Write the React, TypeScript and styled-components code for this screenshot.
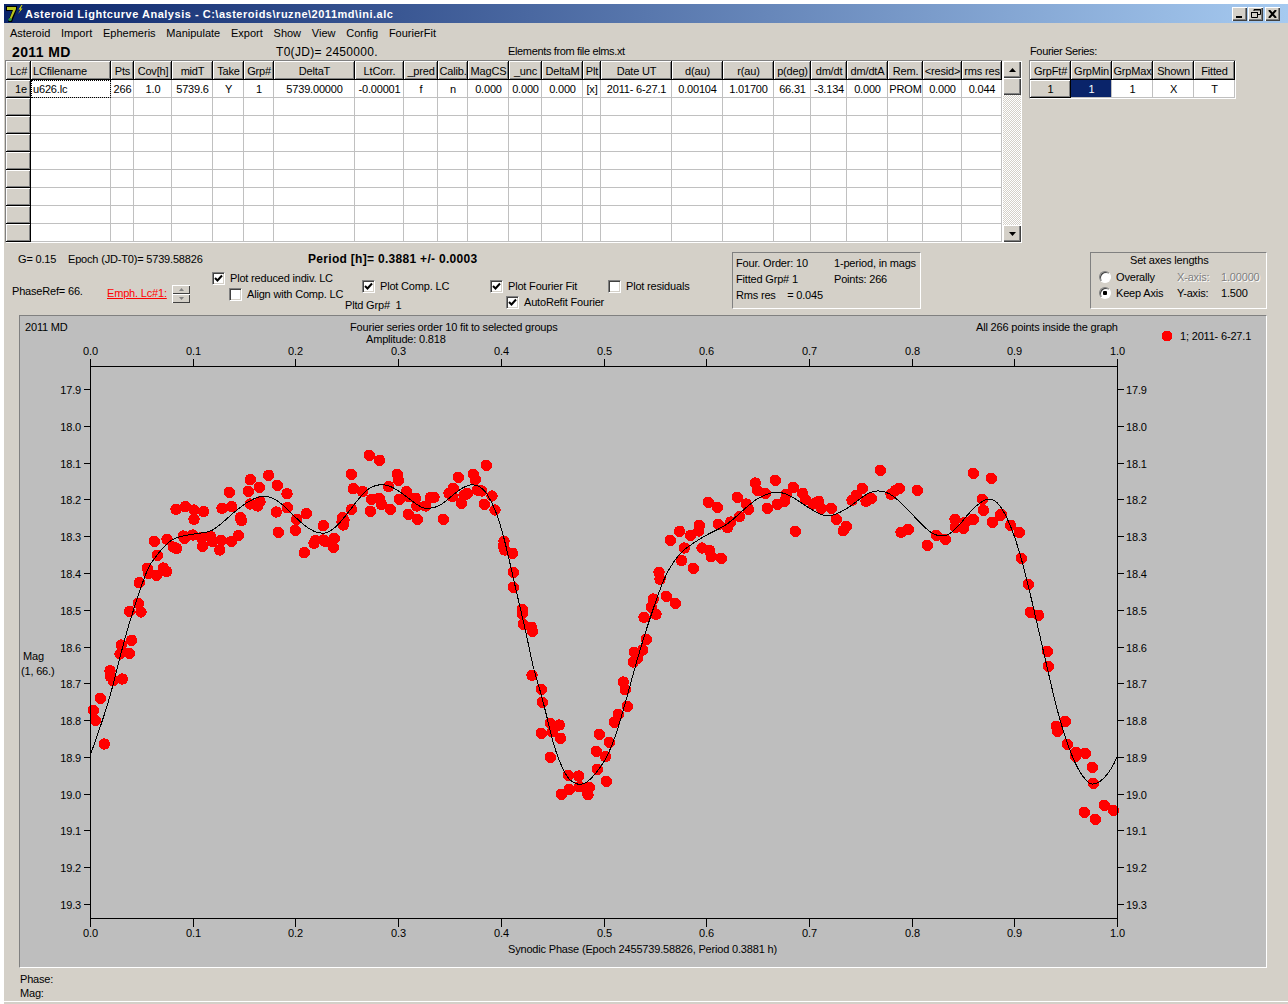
import React from "react";
import styled, { createGlobalStyle } from "styled-components";

const FACE = "#d4d0c8";
const UI_FONT = `"Liberation Sans", Arial, sans-serif`;

const GlobalStyle = createGlobalStyle`
  html, body {
    margin: 0;
    background: #fff;
  }
  body {
    padding: 4px 0 0 4px;
    overflow: hidden;
    font: 11px/14px ${UI_FONT};
    letter-spacing: -0.18px;
    color: #000;
  }
`;

/* ---------- lightcurve data, traced off the plot in page pixels ---------- */

type Trace = { x: number; y: number; dots: number[][] };

const TRACES: Trace[] = [
  {
    x: 60, y: 430,
    dots: [
      [100,841],[106,871],[121,805],[133,942],[150,722],[152,740],[160,752],[187,747],[180,672],[184,645],
      [208,670],[215,631],[209,544],[235,520],[243,546],[238,458],[262,415],[265,430],[289,436],[310,414],
      [320,425],[292,376],[283,334],[321,328],[340,351],[350,356],[348,238],[376,230],[402,240],[402,268],
      [431,245],[370,318],[374,325],[398,315],[425,323],[428,349],[452,320],[458,335],[484,331],[479,360],
      [515,334],[535,317],[486,235],[515,230],[541,263],[545,272],[508,187],[565,184],[571,149],[598,172],
      [626,136],[652,166],[681,191],[571,222],[593,228],[600,215],[649,246],[655,307],[682,233],[710,268],
      [739,251],[706,301],[790,287],[733,368],[762,340],[766,332],[790,330],[797,335],[823,325],[820,352],
      [848,263],[850,285],[846,275],[875,238],[874,133],[880,176],[852,270],
    ],
  },
  {
    x: 360, y: 430,
    dots: [
      [28,76],[59,91],[8,185],[35,208],[58,205],[65,224],[31,244],[91,238],[86,170],[112,133],
      [116,151],[118,208],[139,185],[145,199],[167,205],[170,228],[145,253],[172,268],[197,228],[212,202],
      [222,202],[250,268],[295,142],[267,190],[280,175],[278,200],[304,220],[312,196],[322,190],[340,133],
      [346,149],[379,106],[352,180],[365,183],[396,198],[373,223],[405,240],[432,334],[430,348],[434,360],
      [458,370],[460,427],[460,472],[487,538],[487,551],[490,583],[515,592],[518,604],[516,736],[544,778],
      [547,817],[571,880],[598,885],[577,905],[544,910],[602,925],[571,982],[625,1036],[656,1038],[604,1093],
      [628,1078],[658,1070],[688,1072],[684,1094],[682,1082],[712,1018],[739,1054],[709,964],[737,980],[718,913],
      [748,937],[763,877],[775,853],[802,829],[790,756],[796,779],[820,696],[832,686],[823,667],[848,660],
      [859,628],[852,562],[888,553],[874,532],[880,507],[897,427],[900,448],
    ],
  },
  {
    x: 660, y: 430,
    dots: [
      [46,520],[19,499],[65,392],[100,415],[73,354],[31,331],[59,304],[92,316],[116,303],[118,286],
      [126,354],[149,362],[154,380],[184,385],[145,217],[172,232],[175,283],[203,293],[212,276],[239,260],
      [232,202],[259,222],[266,238],[286,159],[292,181],[316,190],[346,151],[322,235],[352,223],[374,214],
      [379,193],[400,172],[406,304],[428,190],[436,208],[460,222],[476,214],[484,235],[514,235],[529,268],
      [559,289],[550,302],[576,211],[589,196],[607,175],[618,214],[634,205],[661,121],[693,193],[706,182],
      [718,175],[772,181],[723,307],[745,298],[829,316],[802,346],[856,328],[885,268],[886,292],
    ],
  },
  {
    x: 900, y: 460,
    dots: [
      [190,205],[196,187],[220,178],[220,40],[274,55],[247,118],[250,151],[277,187],[301,166],[304,163],
      [332,196],[358,217],[364,295],[385,373],[391,457],[416,466],[442,574],[445,619],[469,799],[472,814],
      [496,784],[502,853],[529,877],[526,889],[556,880],[577,922],[580,970],[613,1036],[553,1057],[586,1078],
      [640,1051],
    ],
  },
];

const DOTS = TRACES.flatMap((t) => t.dots.map(([zx, zy]) => [t.x + zx / 3, t.y + zy / 3]));

const FIT = [
  [90.7,754],[100,728],[110,697],[120,657],[128,627],[138,596],[148,567],[157,555],[167,543],[177,537],
  [193,534],[210,532],[220,525],[233,513],[247,502],[260,496],[268,496],[280,502],[293,515],[307,528],
  [320,534],[330,532],[340,523],[350,510],[360,497],[370,487],[382,484],[393,487],[407,497],[420,507],
  [428,509],[440,506],[453,495],[463,487],[473,484],[483,488],[492,502],[500,523],[507,550],[513,577],
  [520,607],[527,637],[533,667],[540,690],[547,717],[553,743],[560,763],[567,777],[573,783],[582,785],
  [590,780],[600,768],[608,755],[617,732],[627,697],[637,660],[647,627],[660,589],[668,570],[680,553],
  [693,543],[710,533],[727,525],[740,513],[757,498],[775,491],[790,495],[807,507],[823,516],[833,516],
  [850,507],[867,493],[880,490],[893,495],[910,512],[927,530],[937,536],[947,536],[958,527],[973,508],
  [987,498],[997,501],[1007,517],[1017,543],[1027,580],[1037,623],[1047,667],[1057,710],[1067,743],[1077,768],
  [1087,782],[1093,785],[1103,780],[1112,768],[1117,757],
];

function smoothPath(pts: number[][]) {
  let d = `M${pts[0][0]} ${pts[0][1]}`;
  for (let i = 1; i < pts.length - 1; i++) {
    const mx = (pts[i][0] + pts[i + 1][0]) / 2;
    const my = (pts[i][1] + pts[i + 1][1]) / 2;
    d += ` Q${pts[i][0]} ${pts[i][1]} ${mx} ${my}`;
  }
  const last = pts[pts.length - 1];
  return `${d} L${last[0]} ${last[1]}`;
}

/* ---------- axis geometry ---------- */

const X0 = 90.5;
const X1 = 1117.5;
const Y_TOP = 366.5;
const Y_BOTTOM = 918.5;
const X_TICKS = Array.from({ length: 11 }, (_, i) => i / 10);
const MAG_TICKS = Array.from({ length: 15 }, (_, i) => 17.9 + i / 10);
const magY = (m: number) => Math.floor(389.5 + (m - 17.9) * 367.9) + 0.5;
const phaseX = (p: number) => Math.floor(X0 + p * (X1 - X0)) + 0.5;

/* ---------- sheet definitions ---------- */

const LC_COLUMNS = [
  { title: "Lc#", width: 25, value: "1e" },
  { title: "LCfilename", width: 80, value: "u626.lc" },
  { title: "Pts", width: 23, value: "266" },
  { title: "Cov[h]", width: 38, value: "1.0" },
  { title: "midT", width: 41, value: "5739.6" },
  { title: "Take", width: 31, value: "Y" },
  { title: "Grp#", width: 30, value: "1" },
  { title: "DeltaT", width: 81, value: "5739.00000" },
  { title: "LtCorr.", width: 49, value: "-0.00001" },
  { title: "_pred", width: 34, value: "f" },
  { title: "Calib.", width: 30, value: "n" },
  { title: "MagCS", width: 41, value: "0.000" },
  { title: "_unc", width: 33, value: "0.000" },
  { title: "DeltaM", width: 41, value: "0.000" },
  { title: "Plt", width: 18, value: "[x]" },
  { title: "Date UT", width: 71, value: "2011- 6-27.1" },
  { title: "d(au)", width: 51, value: "0.00104" },
  { title: "r(au)", width: 51, value: "1.01700" },
  { title: "p(deg)", width: 37, value: "66.31" },
  { title: "dm/dt", width: 36, value: "-3.134" },
  { title: "dm/dtA", width: 41, value: "0.000" },
  { title: "Rem.", width: 35, value: "PROM" },
  { title: "<resid>", width: 39, value: "0.000" },
  { title: "rms res", width: 40, value: "0.044" },
];

const FOURIER_COLUMNS = ["GrpFt#", "GrpMin", "GrpMax", "Shown", "Fitted"];
const FOURIER_ROW = ["1", "1", "1", "X", "T"];
const MENU = ["Asteroid", "Import", "Ephemeris", "Manipulate", "Export", "Show", "View", "Config", "FourierFit"];

/* ---------- window chrome ---------- */

const Window = styled.div`
  width: 1284px;
  height: 1000px;
  background: ${FACE};
  overflow: hidden;
`;

const TitleBar = styled.div`
  height: 19px;
  display: flex;
  align-items: center;
  padding: 0 8px 0 2px;
  background: linear-gradient(90deg, #0a246a, #a6caf0);
`;

const TitleText = styled.span`
  flex: 1;
  margin-left: 2px;
  color: #fff;
  font-weight: bold;
  font-size: 11px;
  letter-spacing: 0.52px;
  white-space: nowrap;
`;

const CaptionButton = styled.button<{ $gap?: number }>`
  width: 15px;
  height: 14px;
  margin-left: ${(p) => p.$gap ?? 0}px;
  padding: 0;
  border: 0;
  background: ${FACE};
  box-shadow: inset 1px 1px 0 #fff, inset -1px -1px 0 #404040, inset -2px -2px 0 #808080;
  display: flex;
  align-items: center;
  justify-content: center;
`;

const MenuBar = styled.div`
  height: 20px;
  display: flex;
  align-items: center;
  padding-left: 0.5px;
`;

const MenuItem = styled.span`
  padding: 0 5.4px;
  letter-spacing: 0;
  white-space: nowrap;
`;

/* ---------- top row: sheets ---------- */

const TopArea = styled.div`
  display: flex;
  height: 200px;
`;

const LcArea = styled.div`
  width: 1025px;
  padding-left: 1px;
  box-sizing: content-box;
`;

const InfoLine = styled.div`
  height: 17px;
  display: flex;
  align-items: center;
`;

const Caption = styled.span<{ $width?: number; $indent?: number }>`
  display: inline-block;
  width: ${(p) => (p.$width ? `${p.$width}px` : "auto")};
  margin-left: ${(p) => p.$indent ?? 0}px;
  white-space: pre;
`;

const SmallCaption = styled(Caption)`
  letter-spacing: -0.35px;
  margin-top: -2px;
`;

const AsteroidName = styled(Caption)`
  font-weight: bold;
  font-size: 14px;
  letter-spacing: 0.4px;
`;

const LargeCaption = styled(Caption)`
  font-size: 12px;
  letter-spacing: 0.3px;
`;

const PeriodCaption = styled(LargeCaption)`
  font-weight: bold;
`;

const SheetRow = styled.div`
  display: flex;
`;

const Sheet = styled.div<{ $columns: string }>`
  display: grid;
  grid-template-columns: ${(p) => p.$columns};
  grid-auto-rows: 18px;
  grid-template-rows: 19px;
  align-self: flex-start;
  background: #fff;
  border: 1px solid;
  border-color: #808080 #fff #fff #808080;
`;

const Cell = styled.div<{ $align?: string; $focus?: boolean; $selected?: boolean }>`
  box-sizing: border-box;
  display: flex;
  align-items: center;
  justify-content: ${(p) => p.$align ?? "center"};
  padding: 0 1px 0 2px;
  overflow: hidden;
  white-space: pre;
  border-right: 1px solid #c0c0c0;
  border-bottom: 1px solid #c0c0c0;
  background: ${(p) => (p.$selected ? "#0a246a" : "#fff")};
  color: ${(p) => (p.$selected ? "#fff" : "#000")};
  ${(p) => (p.$focus ? "outline: 1px dotted #000; outline-offset: -1px;" : "")}
`;

const FixedCell = styled(Cell)`
  background: ${FACE};
  color: #000;
  border-right: 1px solid #000;
  border-bottom: 1px solid #000;
  box-shadow: inset 1px 1px 0 #fff, inset -1px -1px 0 #808080;
  padding-right: ${(p) => (p.$align === "flex-end" ? "3px" : "1px")};
`;

const HeaderCell = styled(FixedCell)`
  padding-top: 2px;
`;

const ScrollBar = styled.div`
  width: 18px;
  height: 181px;
  margin-top: 1px;
  display: flex;
  flex-direction: column;
  border-right: 1px solid #fff;
  border-bottom: 1px solid #fff;
  background: repeating-conic-gradient(${FACE} 0 25%, #fff 0 50%) 0 0 / 2px 2px;
`;

const ScrollButton = styled.div`
  height: 17px;
  flex: none;
  background: ${FACE};
  box-shadow: inset 1px 1px 0 #fff, inset -1px -1px 0 #404040, inset -2px -2px 0 #808080;
  display: flex;
  align-items: center;
  justify-content: center;
`;

const ScrollTrack = styled.div`
  flex: 1;
`;

const FourierArea = styled.div`
  margin-left: -1px;
`;

/* ---------- middle strip: form controls ---------- */

const ControlStrip = styled.div`
  display: flex;
  height: 72px;
`;

const ControlsLeft = styled.div`
  width: 728px;
  display: flex;
  flex-direction: column;
`;

const SummaryRow = styled.div`
  height: 14px;
  margin-top: 9px;
  display: flex;
  padding-left: 14px;
`;

const ChecksRow = styled.div`
  display: flex;
  align-items: flex-start;
  margin-top: 4px;
  padding-left: 8px;
`;

const Nudged = styled.div<{ $top: number; $width: number }>`
  width: ${(p) => p.$width}px;
  padding-top: ${(p) => p.$top}px;
  flex: none;
  white-space: pre;
`;

const EmphLink = styled.span`
  color: #f00;
  text-decoration: underline;
`;

const Spinner = styled.div`
  width: 18px;
  display: flex;
  flex-direction: column;
`;

const SpinButton = styled.div`
  height: 9px;
  background: ${FACE};
  box-shadow: inset 1px 1px 0 #fff, inset -1px -1px 0 #404040;
  display: flex;
  align-items: center;
  justify-content: center;
`;

const CheckRow = styled.label<{ $indent?: number }>`
  height: 16px;
  display: flex;
  align-items: center;
  gap: 5px;
  margin-left: ${(p) => p.$indent ?? 0}px;
  white-space: nowrap;
`;

const CheckBox = styled.span`
  box-sizing: border-box;
  width: 13px;
  height: 13px;
  flex: none;
  background: #fff;
  border: 1px solid;
  border-color: #808080 #fff #fff #808080;
  box-shadow: inset 1px 1px 0 #404040, inset -1px -1px 0 ${FACE};
  display: flex;
  align-items: center;
  justify-content: center;
`;

const GroupLine = styled.div`
  margin-top: 4px;
  height: 14px;
  white-space: pre;
`;

const EtchedBox = styled.div<{ $width: number; $left?: number }>`
  box-sizing: border-box;
  width: ${(p) => p.$width}px;
  height: 57px;
  margin-top: 9px;
  margin-left: ${(p) => p.$left ?? 0}px;
  border: 1px solid;
  border-color: #808080 #fff #fff #808080;
`;

const InfoGrid = styled.div`
  display: grid;
  grid-template-columns: 98px auto;
  grid-auto-rows: 16px;
  align-items: center;
  padding: 2px 0 0 3px;
  white-space: pre;
`;

const AxesTitle = styled.div`
  padding-left: 39px;
  height: 14px;
`;

const AxesGrid = styled.div`
  display: grid;
  grid-template-columns: 78px 44px auto;
  grid-auto-rows: 16px;
  align-items: center;
  margin-top: 2px;
  padding-left: 8px;
`;

const RadioRow = styled.label`
  display: flex;
  align-items: center;
  gap: 5px;
`;

const Radio = styled.span<{ $on?: boolean }>`
  box-sizing: border-box;
  width: 12px;
  height: 12px;
  border-radius: 50%;
  background: ${(p) => (p.$on ? "radial-gradient(circle, #000 0 2px, #fff 2.5px)" : "#fff")};
  border: 1px solid;
  border-color: #808080 #fff #fff #808080;
  box-shadow: inset 1px 1px 0 #404040;
`;

const Disabled = styled.span`
  color: #808080;
  text-shadow: 1px 1px 0 #fff;
`;

/* ---------- plot ---------- */

const PlotPanel = styled.div`
  width: 1246px;
  height: 651px;
  margin-left: 15px;
  background: #bebebe;
  border: 1px solid;
  border-color: #808080 #fff #fff #808080;
`;

const PlotSvg = styled.svg`
  display: block;
  font: 11px ${UI_FONT};
  line, path {
    shape-rendering: crispEdges;
  }
  circle {
    shape-rendering: crispEdges;
    fill: #f00;
  }
`;

const Readout = styled.div`
  padding: 4px 0 0 16px;
  height: 29px;
  border-bottom: 1px solid #fff;
`;

/* ---------- small drawings ---------- */

const AppIcon = () => (
  <svg width="17" height="18" viewBox="0 0 17 18">
    <path d="M0 1h11v3L6 17H2l4-11H0z" fill="#000" />
    <path d="M1 2h9v2L5 15H3l4-10H1z" fill="#b8c41c" />
    <circle cx="4" cy="14.5" r="1.6" fill="#2a9a40" />
    <path d="M15.5 0l-3 4.5h2L12 9l4.5-5.5h-2l2-3.5z" fill="#e8e800" />
  </svg>
);

const CheckMark = () => (
  <svg width="9" height="9" viewBox="0 0 9 9">
    <path d="M1 4l2.5 2.5L8 1.5" fill="none" stroke="#000" strokeWidth="2" />
  </svg>
);

const Arrow = ({ up, size = 7, fill = "#000" }: { up?: boolean; size?: number; fill?: string }) => (
  <svg width={size} height={(size + 1) / 2} viewBox="0 0 7 4">
    <path d={up ? "M3.5 0L7 4H0z" : "M0 0h7L3.5 4z"} fill={fill} />
  </svg>
);

const Check = ({ on, indent, children }: { on?: boolean; indent?: number; children: React.ReactNode }) => (
  <CheckRow $indent={indent}>
    <CheckBox>{on && <CheckMark />}</CheckBox>
    {children}
  </CheckRow>
);

function LcSheet() {
  const columns = LC_COLUMNS.map((c) => `${c.width}px`).join(" ");
  return (
    <Sheet $columns={columns}>
      {LC_COLUMNS.map((c) => (
        <HeaderCell key={c.title} $align={c.title === "LCfilename" ? "flex-start" : "center"}>{c.title}</HeaderCell>
      ))}
      {LC_COLUMNS.map((c, i) =>
        i === 0 ? (
          <FixedCell key={c.title} $align="flex-end">{c.value}</FixedCell>
        ) : (
          <Cell key={c.title} $align={i === 1 ? "flex-start" : "center"} $focus={i === 1}>{c.value}</Cell>
        )
      )}
      {Array.from({ length: 8 }).flatMap((_, row) =>
        LC_COLUMNS.map((c, i) => (i === 0 ? <FixedCell key={`${row}-${i}`} /> : <Cell key={`${row}-${i}`} />))
      )}
    </Sheet>
  );
}

function FourierSheet() {
  return (
    <Sheet $columns="repeat(5, 41px)">
      {FOURIER_COLUMNS.map((t) => <HeaderCell key={t}>{t}</HeaderCell>)}
      {FOURIER_ROW.map((v, i) =>
        i === 0 ? <FixedCell key={i}>{v}</FixedCell> : <Cell key={i} $selected={i === 1}>{v}</Cell>
      )}
    </Sheet>
  );
}

function Plot() {
  return (
    <PlotSvg width="1246" height="651" viewBox="20 316 1246 651">
      <text x="25" y="331">2011 MD</text>
      <text x="350" y="331">Fourier series order 10 fit to selected groups</text>
      <text x="366" y="343">Amplitude: 0.818</text>
      <text x="976" y="331">All 266 points inside the graph</text>
      <text x="1180" y="340">1; 2011- 6-27.1</text>
      <circle cx="1167" cy="336" r="5.5" />
      <text x="23" y="660">Mag</text>
      <text x="21" y="675">(1, 66.)</text>

      {DOTS.map(([x, y], i) => <circle key={i} cx={x} cy={y} r="5.7" />)}

      <line x1={X0} y1={Y_TOP} x2={X1} y2={Y_TOP} stroke="#000" />
      <line x1={X0} y1={Y_BOTTOM} x2={X1} y2={Y_BOTTOM} stroke="#000" />
      <line x1={X0} y1={Y_TOP} x2={X0} y2={Y_BOTTOM} stroke="#000" />
      <line x1={X1} y1={Y_TOP} x2={X1} y2={Y_BOTTOM} stroke="#000" />

      {X_TICKS.map((p) => {
        const x = phaseX(p);
        return (
          <g key={p}>
            <line x1={x} y1={Y_TOP - 8} x2={x} y2={Y_TOP} stroke="#000" />
            <line x1={x} y1={Y_BOTTOM} x2={x} y2={Y_BOTTOM + 8} stroke="#000" />
            <text x={x} y={355} textAnchor="middle">{p.toFixed(1)}</text>
            <text x={x} y={937} textAnchor="middle">{p.toFixed(1)}</text>
          </g>
        );
      })}
      {MAG_TICKS.map((m) => {
        const y = magY(m);
        return (
          <g key={m}>
            <line x1={X0 - 7} y1={y} x2={X0} y2={y} stroke="#000" />
            <line x1={X1} y1={y} x2={X1 + 6} y2={y} stroke="#000" />
            <text x={81} y={y + 4} textAnchor="end">{m.toFixed(1)}</text>
            <text x={1126} y={y + 4}>{m.toFixed(1)}</text>
          </g>
        );
      })}

      <path d={smoothPath(FIT)} fill="none" stroke="#000" />
      <text x="508" y="953">Synodic Phase (Epoch 2455739.58826, Period 0.3881 h)</text>
    </PlotSvg>
  );
}

export default function App() {
  return (
    <>
      <GlobalStyle />
      <Window>
        <TitleBar>
          <AppIcon />
          <TitleText>Asteroid Lightcurve Analysis - C:\asteroids\ruzne\2011md\ini.alc</TitleText>
          <CaptionButton>
            <svg width="8" height="8" viewBox="0 0 8 8"><path d="M0 6h6v2H0z" fill="#000" /></svg>
          </CaptionButton>
          <CaptionButton $gap={1}>
            <svg width="10" height="9" viewBox="0 0 10 9">
              <path d="M3 .5h6.5v5H7M3 2V.5M.5 3.5h6v5h-6z" fill="none" stroke="#000" />
              <path d="M3 1h7M0 3.5h7" stroke="#000" />
            </svg>
          </CaptionButton>
          <CaptionButton $gap={2}>
            <svg width="9" height="8" viewBox="0 0 9 8"><path d="M1 0l7 8M8 0L1 8" stroke="#000" strokeWidth="2" /></svg>
          </CaptionButton>
        </TitleBar>

        <MenuBar>
          {MENU.map((m) => <MenuItem key={m}>{m}</MenuItem>)}
        </MenuBar>

        <TopArea>
          <LcArea>
            <InfoLine>
              <AsteroidName $width={264} $indent={7}>2011 MD</AsteroidName>
              <LargeCaption $width={232}>T0(JD)= 2450000.</LargeCaption>
              <SmallCaption>Elements from file elms.xt</SmallCaption>
            </InfoLine>
            <SheetRow>
              <LcSheet />
              <ScrollBar>
                <ScrollButton><Arrow up /></ScrollButton>
                <ScrollButton />
                <ScrollTrack />
                <ScrollButton><Arrow /></ScrollButton>
              </ScrollBar>
            </SheetRow>
          </LcArea>
          <FourierArea>
            <InfoLine>
              <SmallCaption $indent={1}>Fourier Series:</SmallCaption>
            </InfoLine>
            <FourierSheet />
          </FourierArea>
        </TopArea>

        <ControlStrip>
          <ControlsLeft>
            <SummaryRow>
              <Caption $width={50}>G= 0.15</Caption>
              <Caption $width={240}>Epoch (JD-T0)= 5739.58826</Caption>
              <PeriodCaption>Period [h]= 0.3881 +/- 0.0003</PeriodCaption>
            </SummaryRow>
            <ChecksRow>
              <Nudged $top={14} $width={95}>PhaseRef= 66.</Nudged>
              <Nudged $top={16} $width={65}><EmphLink>Emph. Lc#1:</EmphLink></Nudged>
              <Nudged $top={15} $width={40}>
                <Spinner>
                  <SpinButton><Arrow up size={5} fill="#808080" /></SpinButton>
                  <SpinButton><Arrow size={5} fill="#808080" /></SpinButton>
                </Spinner>
              </Nudged>
              <Nudged $top={0} $width={133}>
                <Check on>Plot reduced indiv. LC</Check>
                <Check indent={17}>Align with Comp. LC</Check>
              </Nudged>
              <Nudged $top={8} $width={145}>
                <Check on indent={17}>Plot Comp. LC</Check>
                <GroupLine>Pltd Grp#  1</GroupLine>
              </Nudged>
              <Nudged $top={8} $width={118}>
                <Check on>Plot Fourier Fit</Check>
                <Check on indent={16}>AutoRefit Fourier</Check>
              </Nudged>
              <Nudged $top={8} $width={100}>
                <Check>Plot residuals</Check>
              </Nudged>
            </ChecksRow>
          </ControlsLeft>

          <EtchedBox $width={189}>
            <InfoGrid>
              <span>Four. Order: 10</span>
              <span>1-period, in mags</span>
              <span>Fitted Grp# 1</span>
              <span>Points: 266</span>
              <span>Rms res    = 0.045</span>
            </InfoGrid>
          </EtchedBox>

          <EtchedBox $width={177} $left={169}>
            <AxesTitle>Set axes lengths</AxesTitle>
            <AxesGrid>
              <RadioRow><Radio />Overally</RadioRow>
              <Disabled>X-axis:</Disabled>
              <Disabled>1.00000</Disabled>
              <RadioRow><Radio $on />Keep Axis</RadioRow>
              <span>Y-axis:</span>
              <span>1.500</span>
            </AxesGrid>
          </EtchedBox>
        </ControlStrip>

        <PlotPanel>
          <Plot />
        </PlotPanel>

        <Readout>
          <div>Phase:</div>
          <div>Mag:</div>
        </Readout>
      </Window>
    </>
  );
}
